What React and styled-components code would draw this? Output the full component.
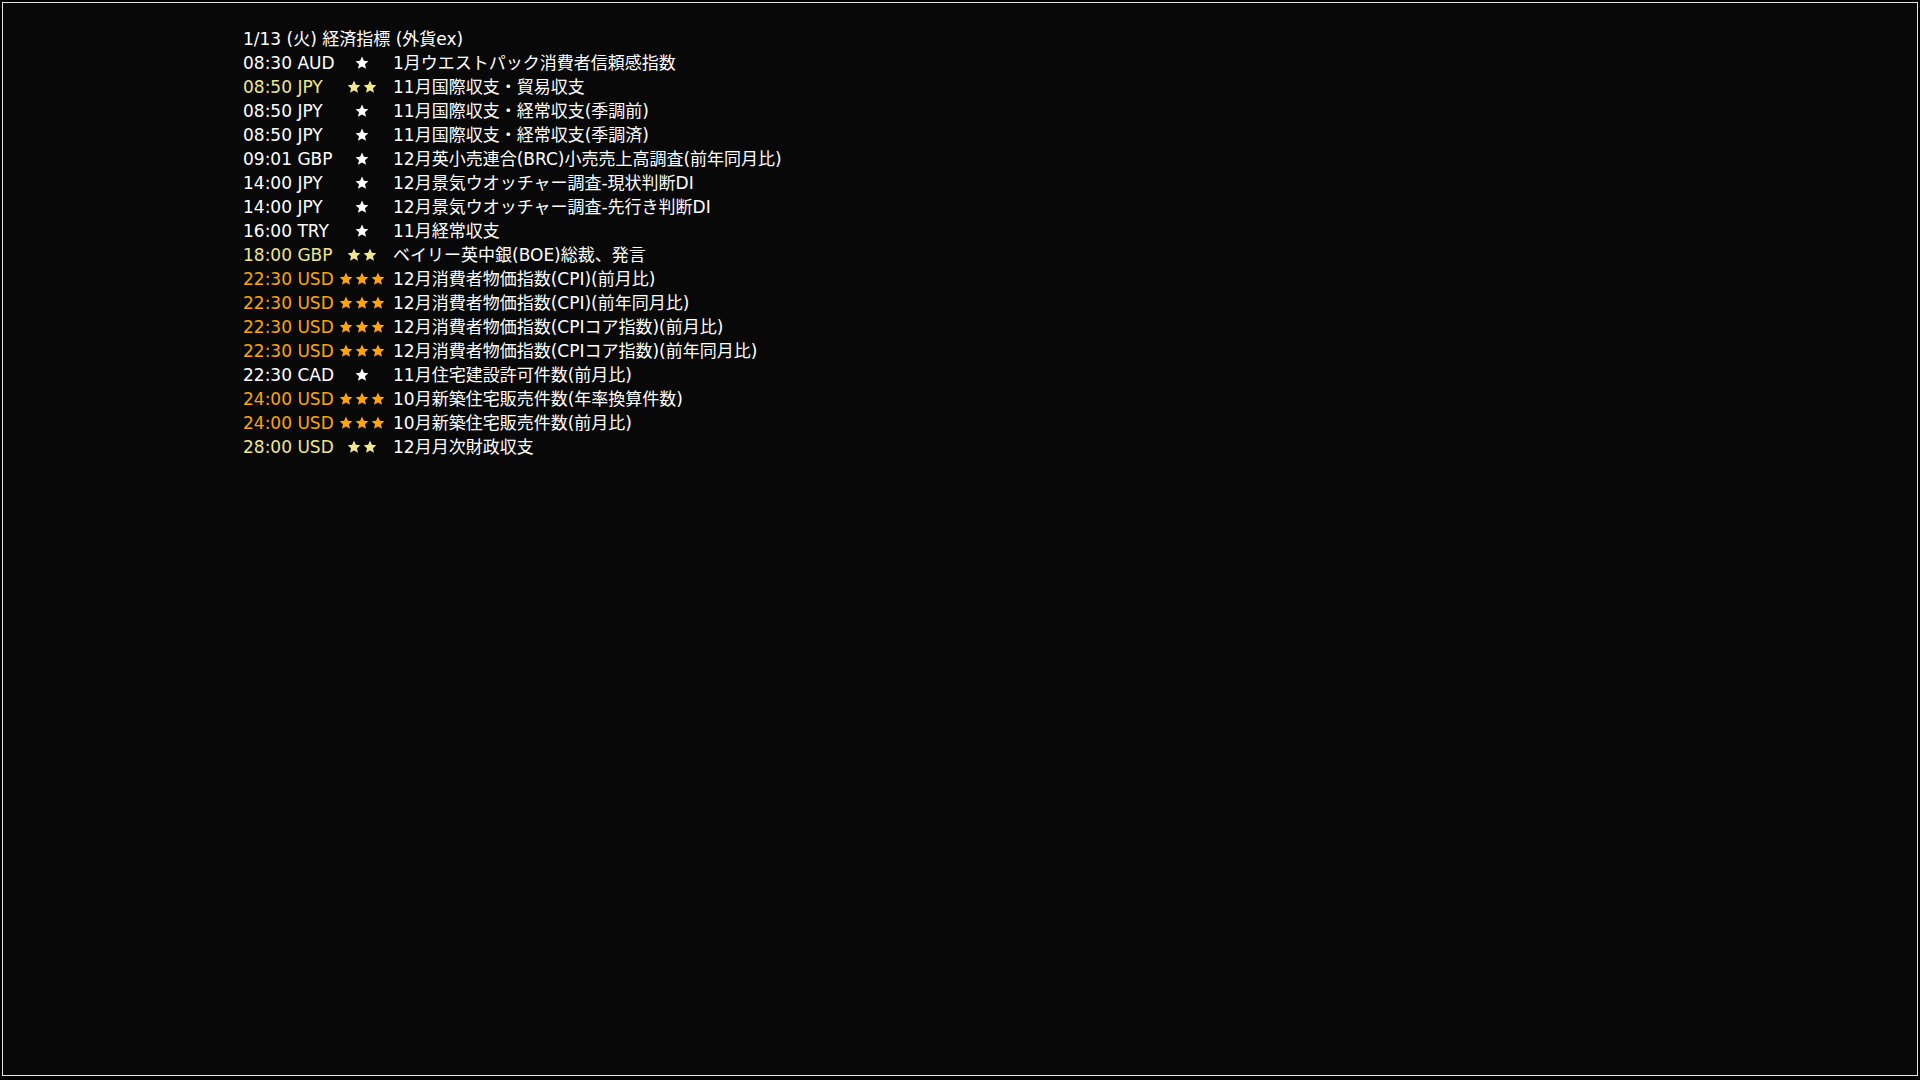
import React from "react";
import styled, { createGlobalStyle } from "styled-components";

const GlobalStyle = createGlobalStyle`
  html, body {
    margin: 0;
    padding: 0;
    background: #000;
  }
  body {
    font-family: "DejaVu Sans", "Noto Sans CJK JP", sans-serif;
  }
`;

const Frame = styled.div`
  box-sizing: border-box;
  margin: 2px 0 0 2px;
  width: 1916px;
  height: 1074px;
  border: 1px solid #e6e6e6;
  background: #080808;
  padding: 24px 0 0 240px;
  overflow: hidden;
`;

const List = styled.div`
  display: flex;
  flex-direction: column;
  font-size: 17px;
  font-weight: 400;
  line-height: 24px;
  color: #ffffff;
`;

const Header = styled.div`
  height: 24px;
  white-space: nowrap;
`;

const Row = styled.div`
  display: flex;
  align-items: center;
  height: 24px;
  white-space: nowrap;
`;

const colorFor = (n) => (n === 3 ? "#ffa500" : n === 2 ? "#f0e68c" : "#ffffff");

const TimeCell = styled.span`
  width: 94px;
  color: ${(p) => colorFor(p.$level)};
`;

const Stars = styled.span`
  width: 50px;
  display: flex;
  justify-content: center;
  gap: 2px;
  color: ${(p) => colorFor(p.$level)};
`;

const Desc = styled.span`
  margin-left: 6px;
  color: #ffffff;
`;

const Star = () => (
  <svg width="14" height="14" viewBox="0 0 24 24">
    <path
      fill="currentColor"
      d="M12 1l3.2 7.3 7.8.7-5.9 5.2 1.8 7.8L12 17.9 5.1 22l1.8-7.8L1 9l7.8-.7z"
    />
  </svg>
);

const rows = [
  ["08:30", "AUD", 1, "1月ウエストパック消費者信頼感指数"],
  ["08:50", "JPY", 2, "11月国際収支・貿易収支"],
  ["08:50", "JPY", 1, "11月国際収支・経常収支(季調前)"],
  ["08:50", "JPY", 1, "11月国際収支・経常収支(季調済)"],
  ["09:01", "GBP", 1, "12月英小売連合(BRC)小売売上高調査(前年同月比)"],
  ["14:00", "JPY", 1, "12月景気ウオッチャー調査-現状判断DI"],
  ["14:00", "JPY", 1, "12月景気ウオッチャー調査-先行き判断DI"],
  ["16:00", "TRY", 1, "11月経常収支"],
  ["18:00", "GBP", 2, "ベイリー英中銀(BOE)総裁、発言"],
  ["22:30", "USD", 3, "12月消費者物価指数(CPI)(前月比)"],
  ["22:30", "USD", 3, "12月消費者物価指数(CPI)(前年同月比)"],
  ["22:30", "USD", 3, "12月消費者物価指数(CPIコア指数)(前月比)"],
  ["22:30", "USD", 3, "12月消費者物価指数(CPIコア指数)(前年同月比)"],
  ["22:30", "CAD", 1, "11月住宅建設許可件数(前月比)"],
  ["24:00", "USD", 3, "10月新築住宅販売件数(年率換算件数)"],
  ["24:00", "USD", 3, "10月新築住宅販売件数(前月比)"],
  ["28:00", "USD", 2, "12月月次財政収支"],
];

export default function App() {
  return (
    <>
      <GlobalStyle />
      <Frame>
        <List>
          <Header>1/13 (火) 経済指標 (外貨ex)</Header>
          {rows.map(([time, cur, level, desc], i) => (
            <Row key={i}>
              <TimeCell $level={level}>
                {time} {cur}
              </TimeCell>
              <Stars $level={level}>
                {Array.from({ length: level }).map((_, j) => (
                  <Star key={j} />
                ))}
              </Stars>
              <Desc>{desc}</Desc>
            </Row>
          ))}
        </List>
      </Frame>
    </>
  );
}
